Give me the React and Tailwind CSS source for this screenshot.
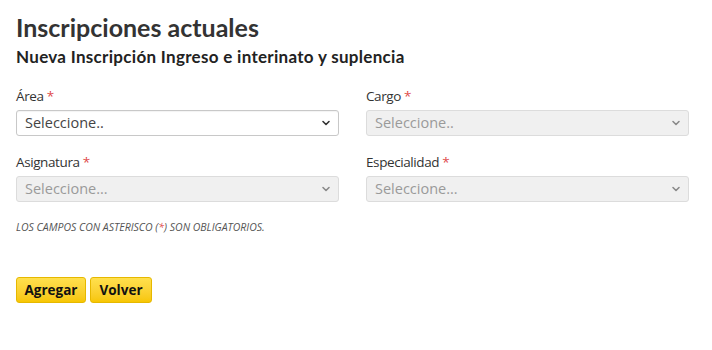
import React from "react";

const Chevron = ({ muted }) => (
  <svg width="10" height="10" viewBox="0 0 10 10" className="absolute right-[8px] top-1/2 -translate-y-1/2 pointer-events-none">
    <path d="M2 3.5 L5 6.5 L8 3.5" fill="none" stroke={muted ? "#8a8a8a" : "#333"} strokeWidth="1.6" strokeLinecap="round" strokeLinejoin="round" />
  </svg>
);

const Field = ({ label, placeholder, disabled }) => (
  <div className="flex flex-col">
    <label className="text-[13.5px] leading-[20px] text-[#333] mb-[4px] tracking-[-0.4px]">
      {label} <span className="text-[#e04b4b]">*</span>
    </label>
    <div className="relative">
      <div
        className={
          "h-[26px] rounded-[3px] border flex items-center pl-[8px] text-[14.5px] " +
          (disabled
            ? "bg-[#f0f0f0] border-[#dcdcdc] text-[#9a9a9a]"
            : "bg-white border-[#c8c8c8] text-[#444] shadow-[inset_0_1px_1px_rgba(0,0,0,0.05)]")
        }
      >
        {placeholder}
      </div>
      <Chevron muted={disabled} />
    </div>
  </div>
);

export default function App() {
  return (
    <div className="w-[712px] h-[350px] bg-white px-[16px] pt-[11px]" style={{ fontFamily: '"Open Sans", sans-serif' }}>
      <h1 className="text-[25px] leading-[32px] font-bold text-[#333]" style={{ fontFamily: 'Lato, sans-serif' }}>
        Inscripciones actuales
      </h1>
      <h2 className="text-[17px] leading-[24px] font-bold text-[#222] mt-[2px] tracking-[0.3px]" style={{ fontFamily: 'Lato, sans-serif' }}>
        Nueva Inscripción Ingreso e interinato y suplencia
      </h2>

      <div className="grid grid-cols-2 gap-x-[27px] gap-y-[16px] mt-[17px] w-[673px]">
        <Field label="Área" placeholder="Seleccione.." />
        <Field label="Cargo" placeholder="Seleccione.." disabled />
        <Field label="Asignatura" placeholder="Seleccione..." disabled />
        <Field label="Especialidad" placeholder="Seleccione..." disabled />
      </div>

      <p className="mt-[18px] text-[10.5px] leading-[15px] italic uppercase text-[#555]">
        Los campos con asterisco (<span className="text-[#e04b4b]">*</span>) son obligatorios.
      </p>

      <div className="flex gap-[4px] mt-[42px]">
        <button className="h-[26px] w-[70px] rounded-[3px] border border-[#e6b800] bg-gradient-to-b from-[#ffe04d] to-[#f7c600] text-[13.5px] font-bold text-[#111]">
          Agregar
        </button>
        <button className="h-[26px] w-[62px] rounded-[3px] border border-[#e6b800] bg-gradient-to-b from-[#ffe04d] to-[#f7c600] text-[13.5px] font-bold text-[#111]">
          Volver
        </button>
      </div>
    </div>
  );
}
